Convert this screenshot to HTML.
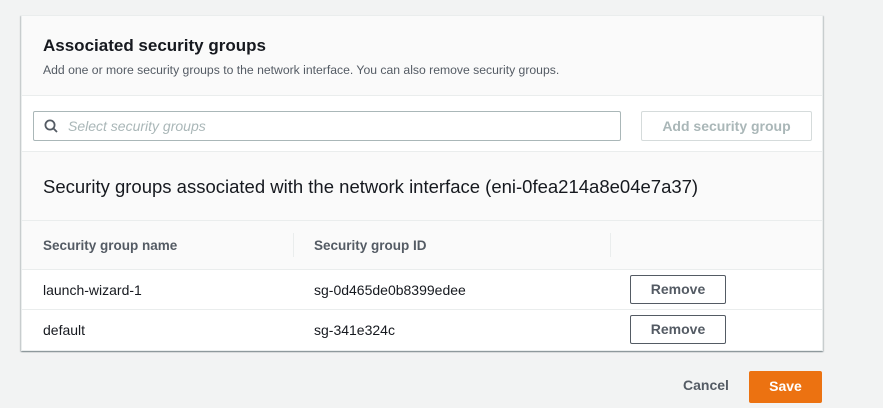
<!DOCTYPE html>
<html><head><style>
*{box-sizing:border-box;margin:0;padding:0}
body{width:883px;height:408px;background:#f2f3f3;font-family:"Liberation Sans",sans-serif;position:relative;overflow:hidden;color:#16191f}
.card{position:absolute;left:21px;top:15px;width:802px;height:336px;background:#fff;border:1px solid #eaeded;box-shadow:0 1px 1px rgba(0,28,36,.3),1px 1px 1px rgba(0,28,36,.15),-1px 1px 1px rgba(0,28,36,.15)}
.abs{position:absolute}
.hdr{left:0;top:0;width:100%;height:80px;background:#fafafa;border-bottom:1px solid #eaeded}
.h2{left:21px;top:20px;font-size:17px;font-weight:bold}
.sub{left:21px;top:47px;font-size:12.2px;color:#545b64}
.search{left:11px;top:95px;width:588px;height:30px;border:1px solid #aab7b8;border-radius:2px;background:#fff}
.search span{position:absolute;left:34px;top:6px;font-size:14px;font-style:italic;color:#aab7b8}
.addbtn{left:619px;top:95px;width:171px;height:30px;border:1px solid #d5dbdb;border-radius:2px;font-size:14px;font-weight:bold;color:#aab7b8;text-align:center;line-height:28px}
.sec{left:0;top:135px;width:100%;height:70px;background:#fafafa;border-top:1px solid #eaeded;border-bottom:1px solid #eaeded}
.sec div{position:absolute;left:21px;top:24px;font-size:18.5px}
.th{left:0;top:205px;width:100%;height:49px;background:#fafafa;border-bottom:1px solid #eaeded;font-size:13.5px;font-weight:bold;color:#545b64}
.row{left:0;width:100%;height:40px;border-bottom:1px solid #eaeded;font-size:14px;color:#16191f}
.c1{position:absolute;left:21px}
.c2{position:absolute;left:292px}
.rm{position:absolute;left:608px;top:5px;width:96px;height:29px;border:1px solid #545b64;border-radius:2px;font-weight:bold;color:#545b64;text-align:center;line-height:27px;font-size:14px}
.sep{position:absolute;top:12px;width:1px;height:24px;background:#eaeded}
</style></head><body>
<div class="card">
 <div class="abs hdr"></div>
 <div class="abs h2">Associated security groups</div>
 <div class="abs sub">Add one or more security groups to the network interface. You can also remove security groups.</div>
 <div class="abs search"><svg style="position:absolute;left:10px;top:7px" width="14" height="14" viewBox="0 0 14 14"><circle cx="6" cy="6" r="4.6" fill="none" stroke="#545b64" stroke-width="1.8"/><path d="M9.4 9.4L13 13" stroke="#545b64" stroke-width="1.8"/></svg><span>Select security groups</span></div>
 <div class="abs addbtn">Add security group</div>
 <div class="abs sec"><div>Security groups associated with the network interface (eni-0fea214a8e04e7a37)</div></div>
 <div class="abs th"><span class="c1" style="top:17px">Security group name</span><div class="sep" style="left:271px"></div><span class="c2" style="top:17px">Security group ID</span><div class="sep" style="left:588px"></div></div>
 <div class="abs row" style="top:254px"><span class="c1" style="top:12px">launch-wizard-1</span><span class="c2" style="top:12px">sg-0d465de0b8399edee</span><div class="rm">Remove</div></div>
 <div class="abs row" style="top:294px;border-bottom:none"><span class="c1" style="top:12px">default</span><span class="c2" style="top:12px">sg-341e324c</span><div class="rm">Remove</div></div>
</div>
<div class="abs" style="left:683px;top:377px;font-size:14px;font-weight:bold;color:#545b64">Cancel</div>
<div class="abs" style="left:749px;top:371px;width:73px;height:32px;background:#ec7211;color:#fff;font-size:14px;font-weight:bold;text-align:center;line-height:30px;border-radius:2px">Save</div>
</body></html>
